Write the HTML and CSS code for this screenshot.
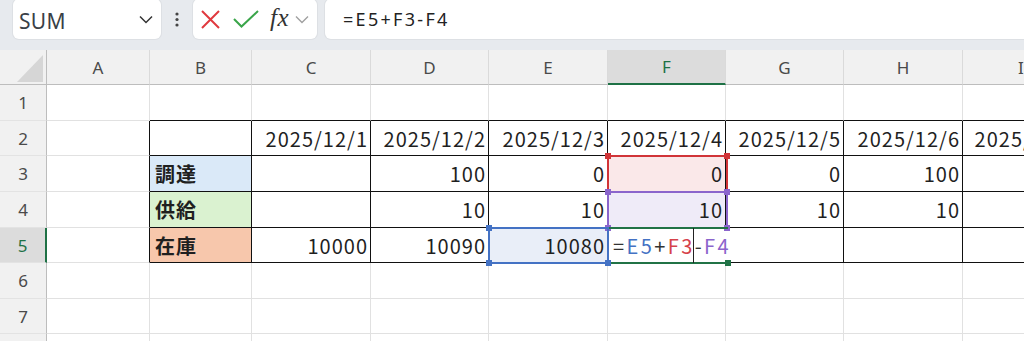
FILE: index.html
```html
<!DOCTYPE html>
<html lang="ja">
<head>
<meta charset="utf-8">
<link rel="stylesheet" href="styles.css">
</head>
<body>
<div class="toolbar">
  <div class="namebox">
    <span class="nametext">SUM</span>
    <svg class="chev" width="14" height="9" viewBox="0 0 14 9"><path d="M1 1.5 L7 7.5 L13 1.5" fill="none" stroke="#333" stroke-width="1.5"/></svg>
  </div>
  <div class="dots">
    <svg width="4" height="15" viewBox="0 0 4 15"><circle cx="2" cy="2" r="1.6" fill="#444"/><circle cx="2" cy="7.5" r="1.6" fill="#444"/><circle cx="2" cy="13" r="1.6" fill="#444"/></svg>
  </div>
  <div class="fbtns">
    <svg class="xicon" width="19" height="19" viewBox="0 0 19 19"><path d="M1 1 L18 18 M18 1 L1 18" stroke="#e0393e" stroke-width="2" fill="none"/></svg>
    <svg class="check" width="26" height="18" viewBox="0 0 26 18"><path d="M1 9 L8.5 16.5 L25 1" stroke="#3aa54a" stroke-width="2" fill="none"/></svg>
    <span class="fx">fx</span>
    <svg class="chev2" width="14" height="9" viewBox="0 0 14 9"><path d="M1 1.5 L7 7.5 L13 1.5" fill="none" stroke="#a0a0a0" stroke-width="1.4"/></svg>
  </div>
  <div class="formula">=E5+F3-F4</div>
</div>

<div class="sheet">
  <div class="corner"><svg width="47" height="35" viewBox="0 0 47 35"><path d="M43 5 L43 32 L17 32 Z" fill="#d6d6d6"/></svg></div>
  <div class="ch">A</div><div class="ch">B</div><div class="ch">C</div><div class="ch">D</div><div class="ch">E</div><div class="ch sel">F</div><div class="ch">G</div><div class="ch">H</div><div class="ch last">I</div>

  <div class="rh">1</div>
  <div class="c"></div><div class="c tb"></div><div class="c tb"></div><div class="c tb"></div><div class="c tb"></div><div class="c tb"></div><div class="c tb"></div><div class="c tb"></div><div class="c tb"></div>

  <div class="rh">2</div>
  <div class="c tr"></div><div class="c t"></div><div class="c t">2025/12/1</div><div class="c t">2025/12/2</div><div class="c t">2025/12/3</div><div class="c t">2025/12/4</div><div class="c t">2025/12/5</div><div class="c t">2025/12/6</div><div class="c t">2025/12/7</div>

  <div class="rh">3</div>
  <div class="c tr"></div><div class="c t lab blue">調達</div><div class="c t"></div><div class="c t">100</div><div class="c t">0</div><div class="c t pink">0</div><div class="c t">0</div><div class="c t">100</div><div class="c t"></div>

  <div class="rh">4</div>
  <div class="c tr"></div><div class="c t lab green">供給</div><div class="c t"></div><div class="c t">10</div><div class="c t">10</div><div class="c t lav">10</div><div class="c t">10</div><div class="c t">10</div><div class="c t"></div>

  <div class="rh sel">5</div>
  <div class="c tr"></div><div class="c t lab orange">在庫</div><div class="c t">10000</div><div class="c t">10090</div><div class="c t ice">10080</div><div class="c t edit"><span class="k">=</span><span class="cb">E5</span><span class="k">+</span><span class="cr">F3</span><span class="k">-</span><span class="cp">F4</span></div><div class="c t"></div><div class="c t"></div><div class="c t"></div>

  <div class="rh">6</div>
  <div class="c"></div><div class="c"></div><div class="c"></div><div class="c"></div><div class="c"></div><div class="c"></div><div class="c"></div><div class="c"></div><div class="c"></div>

  <div class="rh">7</div>
  <div class="c"></div><div class="c"></div><div class="c"></div><div class="c"></div><div class="c"></div><div class="c"></div><div class="c"></div><div class="c"></div><div class="c"></div>

  <div class="rh"></div>
  <div class="c"></div><div class="c"></div><div class="c"></div><div class="c"></div><div class="c"></div><div class="c"></div><div class="c"></div><div class="c"></div><div class="c"></div>

  <div class="ref ref-f3"><i class="sq tl"></i><i class="sq tr2"></i></div>
  <div class="ref ref-f4"><i class="sq tl"></i><i class="sq tr2"></i><i class="sq bl"></i><i class="sq br"></i></div>
  <div class="ref ref-f5"><i class="sq br"></i></div>
  <div class="ref ref-e5"><i class="sq tl"></i><i class="sq bl"></i><i class="sq br"></i></div>
  <div class="caret"></div>
</div>
</body>
</html>
```

FILE: styles.css
```css
* { box-sizing: border-box; }
html, body { margin: 0; padding: 0; }
body {
  width: 1024px;
  height: 341px;
  overflow: hidden;
  background: #fff;
  font-family: "Noto Sans", "Liberation Sans", sans-serif;
}

/* toolbar */
.toolbar {
  height: 50px;
  background: #e7eaee;
  display: flex;
  align-items: flex-start;
  padding-left: 13px;
}
.namebox {
  width: 148px;
  height: 40px;
  margin-top: -1px;
  background: #fff;
  border-radius: 6px;
  box-shadow: 0 0 0 1px #dde0e4;
  display: flex;
  align-items: center;
  justify-content: space-between;
  padding: 0 8px 0 6px;
}
.nametext {
  font-size: 21px;
  color: #3a3f47;
  letter-spacing: 0.3px;
  padding-top: 3px;
}
.dots {
  width: 32px;
  height: 39px;
  display: flex;
  align-items: center;
  justify-content: center;
}
.fbtns {
  width: 124px;
  height: 40px;
  margin-top: -1px;
  background: #fff;
  border-radius: 6px;
  box-shadow: 0 0 0 1px #dde0e4;
  display: flex;
  align-items: center;
  padding-left: 8px;
}
.xicon { margin-right: 13px; }
.check { margin-right: 11px; }
.fx {
  font-family: "Liberation Serif", "DejaVu Serif", serif;
  font-style: italic;
  font-size: 25px;
  color: #333;
  margin-top: -3px;
  margin-right: 6px;
  letter-spacing: 0.5px;
}
.formula {
  flex: 1;
  margin-left: 8px;
  height: 40px;
  margin-top: -1px;
  background: #fff;
  border-radius: 6px 0 0 6px;
  box-shadow: 0 0 0 1px #dde0e4;
  display: flex;
  align-items: center;
  padding-left: 18px;
  font-size: 18px;
  letter-spacing: 2.3px;
  color: #222;
}

/* sheet grid */
.sheet {
  position: relative;
  display: grid;
  grid-template-columns: 47px 103px 102px 119px 118px 119px 118px 118px 119px 117px;
  grid-template-rows: 35px 36px 35px 36px 36px 35px 36px 35px 36px;
  width: 1096px;
}
.corner {
  background: #f1f1f1;
  border-right: 1px solid #bdbdbd;
  border-bottom: 1px solid #bdbdbd;
}
.corner svg { display: block; }
.ch {
  background: #f1f1f1;
  border-right: 1px solid #dadada;
  border-bottom: 1px solid #bdbdbd;
  display: flex;
  align-items: center;
  justify-content: center;
  font-size: 17px;
  color: #4a4a4a;
}
.ch.sel {
  background: #dcdcdc;
  border-bottom: 2px solid #1e7145;
  color: #1e7145;
}
.rh {
  background: #f1f1f1;
  border-right: 1px solid #bdbdbd;
  border-bottom: 1px solid #e3e3e3;
  display: flex;
  align-items: center;
  justify-content: center;
  font-size: 17px;
  color: #4a4a4a;
}
.rh.sel {
  background: #dcdcdc;
  border-right: 2px solid #1e7145;
  color: #1e7145;
}
.c {
  border-right: 1px solid #e1e1e1;
  border-bottom: 1px solid #e1e1e1;
  display: flex;
  align-items: center;
  justify-content: flex-end;
  padding: 0 2px 0 4px;
  font-family: "Noto Sans CJK JP", "Noto Sans", sans-serif;
  font-size: 20px;
  letter-spacing: 1px;
  color: #1f1f1f;
  white-space: nowrap;
  overflow: hidden;
}
.c.tb { border-bottom-color: #111; }
.c.tr { border-right-color: #111; }
.c.t { border-right-color: #111; border-bottom-color: #111; }
.c.lab {
  justify-content: flex-start;
  font-weight: bold;
  padding-left: 5px;
  font-size: 20px;
}
.blue { background: #dae9f8; }
.green { background: #daf2d0; }
.orange { background: #f7c7ac; }
.pink { background: #fae8e9; }
.lav { background: #efebf8; }
.ice { background: #e9eef8; }
.c.edit {
  justify-content: flex-start;
  padding-left: 5px;
  border-right-color: transparent;
  overflow: visible;
  letter-spacing: 2.4px;
}
.k { color: #333; }
.cb { color: #4472c4; }
.cr { color: #d6424a; }
.cp { color: #8b65cc; }

/* formula reference boxes */
.ref {
  position: absolute;
  border: 2px solid;
  pointer-events: none;
}
.ref-f3 { left: 607px; top: 105px; width: 121px; height: 38px; border-color: #d13438; color: #d13438; }
.ref-f4 { left: 607px; top: 141px; width: 121px; height: 38px; border-color: #8b65cc; color: #8b65cc; }
.ref-f5 { left: 607px; top: 177px; width: 121px; height: 37px; border-color: #217346; border-right: none; color: #217346; }
.ref-e5 { left: 488px; top: 177px; width: 121px; height: 37px; border-color: #4472c4; color: #4472c4; }
.sq {
  position: absolute;
  width: 6px;
  height: 6px;
  background: currentColor;
}
.sq.tl { left: -4px; top: -4px; }
.sq.tr2 { right: -4px; top: -4px; }
.sq.bl { left: -4px; bottom: -4px; }
.sq.br { right: -4px; bottom: -4px; }
.ref-f5 .sq.br { right: -3px; }
.caret {
  position: absolute;
  left: 693px;
  top: 178px;
  width: 1px;
  height: 35px;
  background: #222;
}
```
